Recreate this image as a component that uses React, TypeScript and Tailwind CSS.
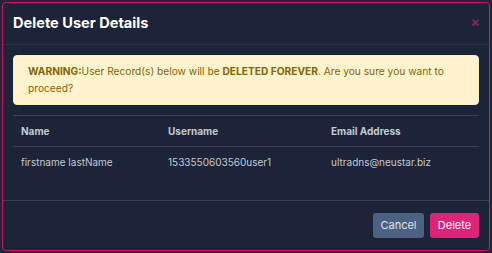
import { type ReactElement } from 'react';

const USERS = [
  { name: 'firstname lastName', username: '1533550603560user1', email: 'ultradns@neustar.biz' },
];

export default function App(): ReactElement {
  return (
    <div className="w-[492px] h-[253px] overflow-hidden bg-[#2a2138] p-[2px] font-['Inter',sans-serif]">
      <div className="w-[488px] h-[249px] flex flex-col bg-[#1b2438] border border-[#c8186a] rounded-[4px] overflow-hidden">
        <div className="h-[42px] shrink-0 flex items-center justify-between pl-[10px] pr-[9px] border-b border-[#2c3546]">
          <h1 className="text-[14.6px] font-bold text-white">Delete User Details</h1>
          <span className="text-[14px] font-bold leading-none text-[#7b2a58] -mt-[3px]">×</span>
        </div>

        <div className="px-[10px] pt-[10px] flex-1">
          <div className="bg-[#fff3cd] border border-[#ffeeba] rounded-[4px] px-[14px] py-[7px] text-[10.2px] leading-[17px] text-[#856404]">
            <b className="font-bold">WARNING:</b>User Record(s) below will be <b className="font-bold">DELETED FOREVER</b>. Are you sure you want to proceed?
          </div>

          <div className="mt-[10px] border-t border-[#3a4354] text-[10px] text-[#c6cad2]">
            <div className="grid grid-cols-[147px_163px_1fr] h-[31px] items-center border-b border-[#3a4354] font-bold">
              <div className="pl-[8px]">Name</div>
              <div className="pl-[8px]">Username</div>
              <div className="pl-[8px]">Email Address</div>
            </div>
            {USERS.map((u) => (
              <div key={u.username} className="grid grid-cols-[147px_163px_1fr] h-[31px] items-center">
                <div className="pl-[8px]">{u.name}</div>
                <div className="pl-[8px]">{u.username}</div>
                <div className="pl-[8px]">{u.email}</div>
              </div>
            ))}
          </div>
        </div>

        <div className="h-[50px] shrink-0 border-t border-[#3a4354] flex items-center justify-end gap-[6px] pr-[10px] pb-[1px]">
          <button className="h-[25px] w-[51px] rounded-[3px] bg-[#4d6282] text-[11px] text-[#dfe4ec]">Cancel</button>
          <button className="h-[25px] w-[49px] rounded-[3px] bg-[#e0237a] text-[11px] text-white">Delete</button>
        </div>
      </div>
    </div>
  );
}
